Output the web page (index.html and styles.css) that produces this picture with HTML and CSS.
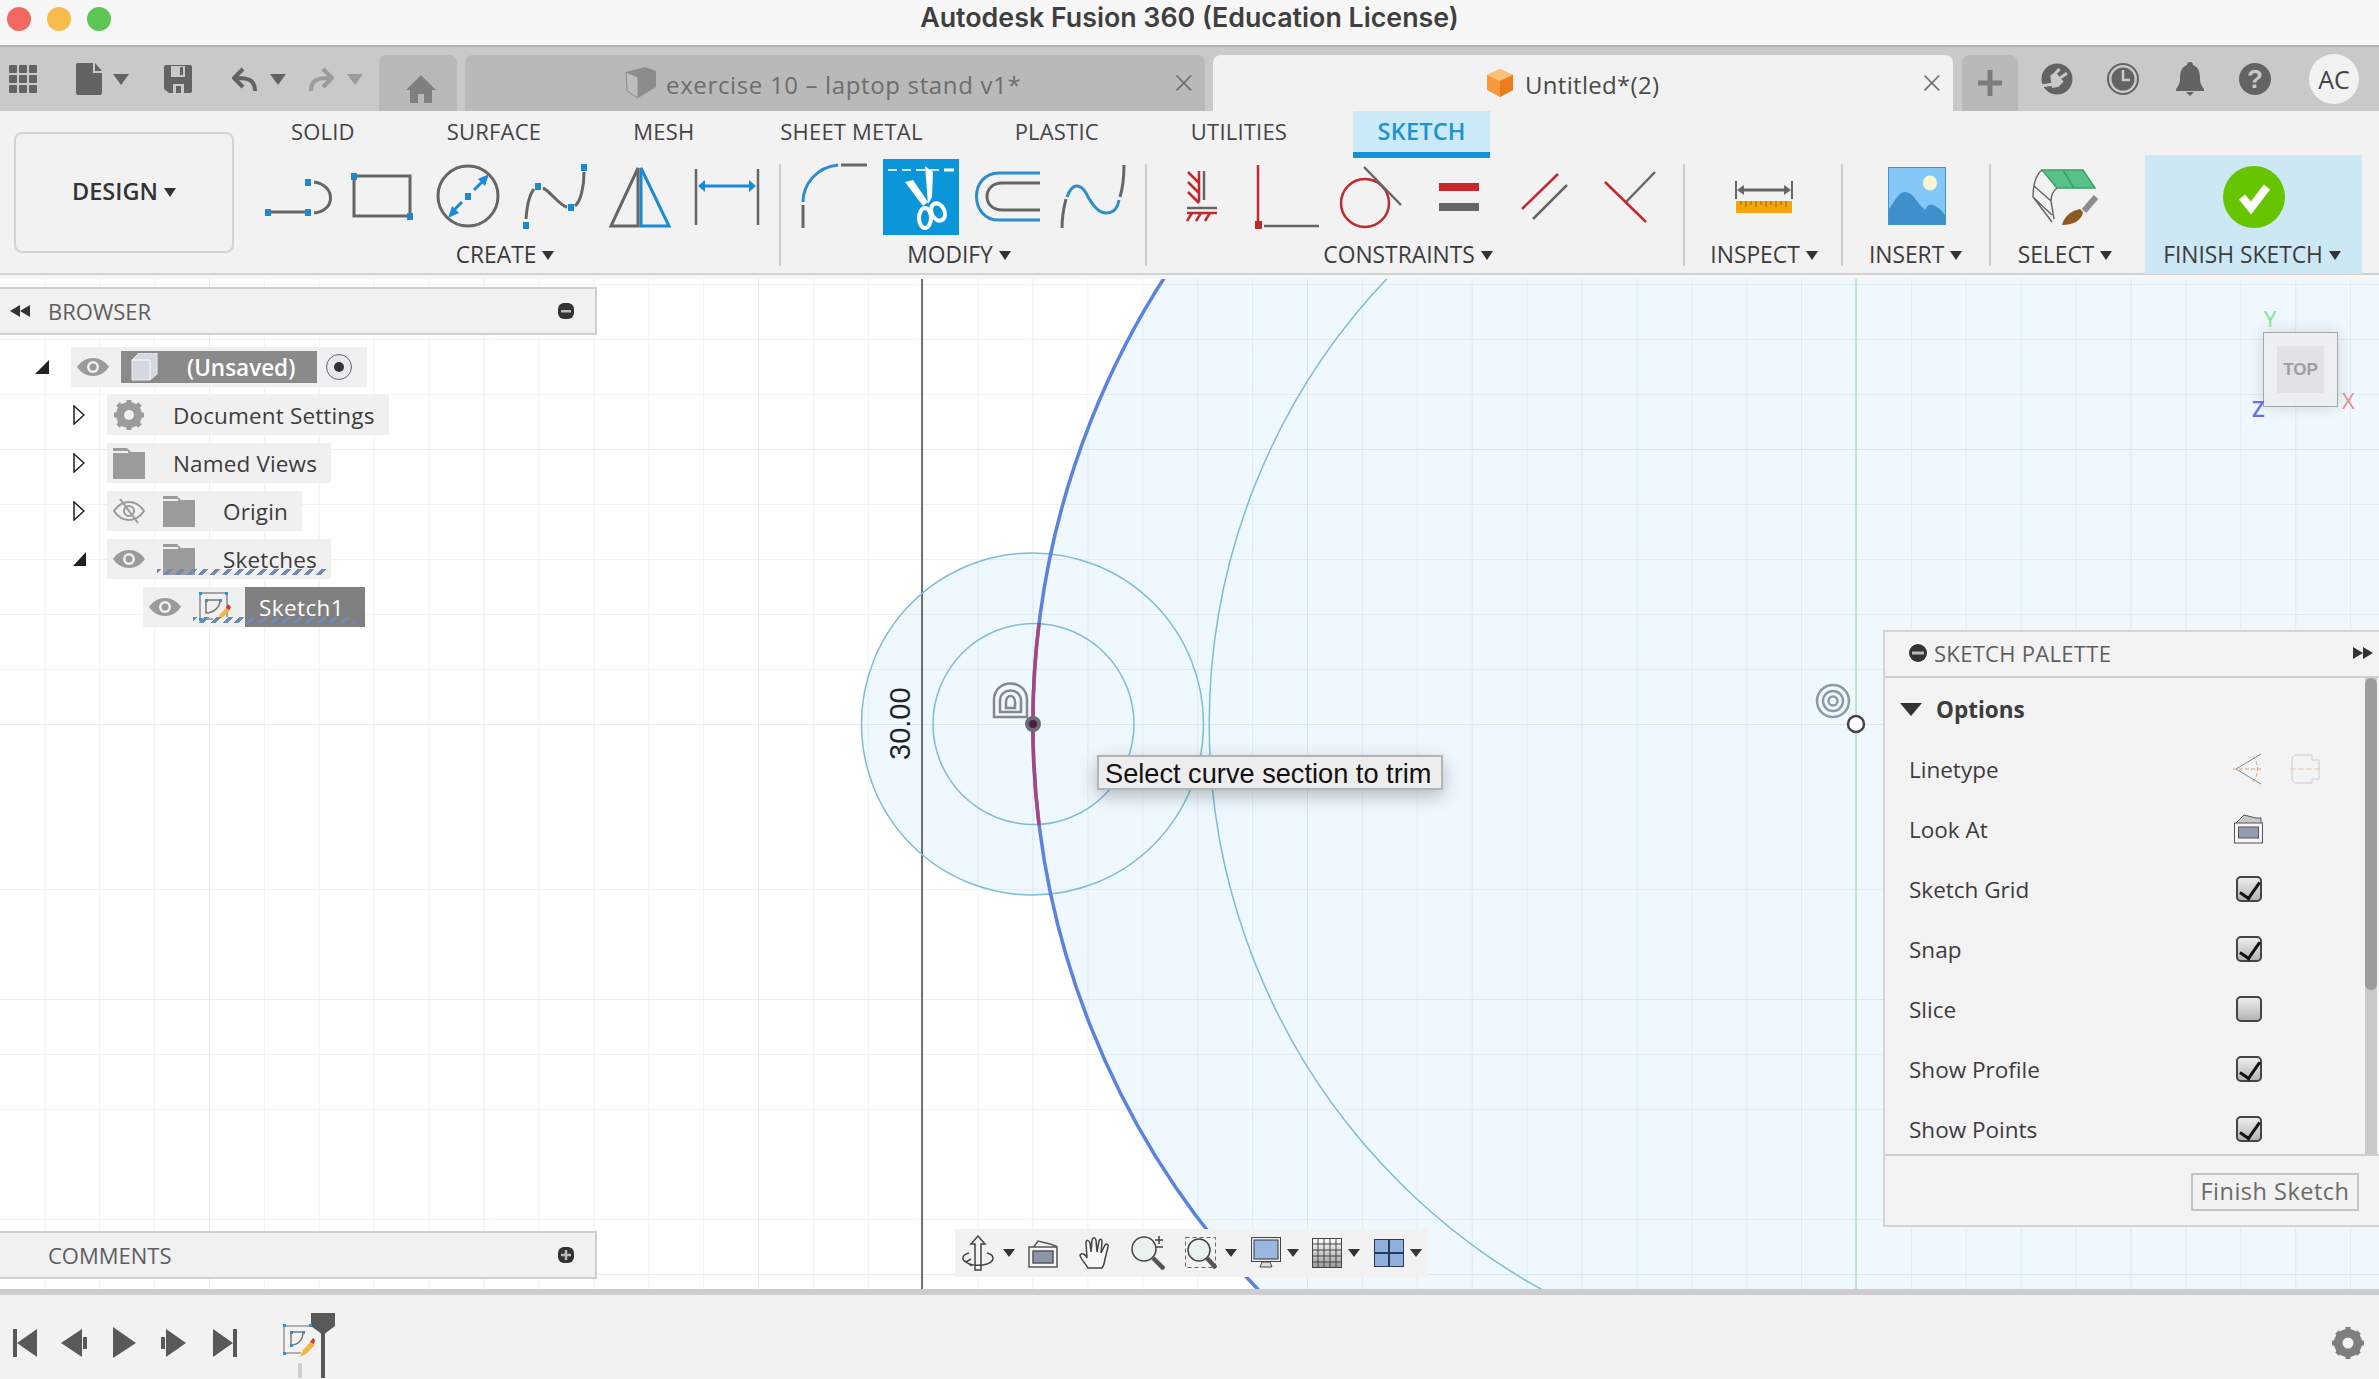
FILE: index.html
```html
<!DOCTYPE html>
<html lang="en">
<head>
  <meta charset="UTF-8">
  <title>Autodesk Fusion 360 (Education License)</title>
  <link rel="stylesheet" href="styles.css">
</head>
<body>
<div class="app">

  <!-- window title -->
  <div class="titlebar">
    <div class="lights">
      <span class="light red"></span>
      <span class="light yellow"></span>
      <span class="light green"></span>
    </div>
    <div class="title">Autodesk Fusion 360 (Education License)</div>
  </div>

  <!-- document tabs -->
  <div class="tabbar">
    <div class="quick">
      <svg class="qa-grid" width="28" height="28" viewBox="0 0 28 28" fill="#636363"><rect width="8" height="8" rx="1"/><rect x="10" width="8" height="8" rx="1"/><rect x="20" width="8" height="8" rx="1"/><rect y="10" width="8" height="8" rx="1"/><rect x="10" y="10" width="8" height="8" rx="1"/><rect x="20" y="10" width="8" height="8" rx="1"/><rect y="20" width="8" height="8" rx="1"/><rect x="10" y="20" width="8" height="8" rx="1"/><rect x="20" y="20" width="8" height="8" rx="1"/></svg>
      <svg class="qa-file" width="26" height="32" viewBox="0 0 26 32" fill="#636363"><path d="M2 0H17V10H26V30a2 2 0 0 1-2 2H2a2 2 0 0 1-2-2V2a2 2 0 0 1 2-2Z"/><path d="M19 0L26 8H19Z"/></svg>
      <span class="caret qa-c1"></span>
      <svg class="qa-save" width="28" height="28" viewBox="0 0 28 28" fill="#636363"><path d="M2 0H26a2 2 0 0 1 2 2V26a2 2 0 0 1-2 2H5L0 24V2a2 2 0 0 1 2-2Z"/><path d="M7 1H21V12H7Z" fill="#c9c9c9"/><rect x="16" y="2" width="3" height="8" fill="#636363"/><path d="M9 28V19H20V28H17V21H12V28Z" fill="#c9c9c9"/></svg>
      <svg class="qa-undo" width="26" height="24" viewBox="0 0 26 24" fill="none" stroke="#636363" stroke-width="4"><path d="M24 24C24 14 19 11 6 11"/><path d="M12 2L3 11L12 20" stroke-linejoin="round"/></svg>
      <span class="caret qa-c2"></span>
      <svg class="qa-redo" width="26" height="24" viewBox="0 0 26 24" fill="none" stroke="#9b9b9b" stroke-width="4"><path d="M2 24C2 14 7 11 20 11"/><path d="M14 2L23 11L14 20" stroke-linejoin="round"/></svg>
      <span class="caret qa-c3"></span>
    </div>
    <div class="tab tab-home">
      <svg width="30" height="28" viewBox="0 0 30 28" fill="#7f7f7f"><path d="M15 0L30 15H26V28H18V19H12V28H4V15H0Z"/></svg>
    </div>
    <div class="tab tab-doc">
      <svg width="32" height="32" viewBox="0 0 32 32"><path d="M1 5L20 0L31 4V20L13 31L2 24Z" fill="#8c8c8c"/><path d="M1 5L13 10V31L2 24Z" fill="#bdbdbd" stroke="#8c8c8c"/></svg>
      <span class="tab-text">exercise 10 – laptop stand v1*</span>
      <span class="tab-close">×</span>
    </div>
    <div class="tab tab-active">
      <svg width="30" height="30" viewBox="0 0 30 30"><path d="M15 1L28 7V22L15 29L2 22V7Z" fill="#f79a3e"/><path d="M2 7L15 13L28 7L15 1Z" fill="#fbc079"/><path d="M15 13V29L28 22V7Z" fill="#ec7c1c"/></svg>
      <span class="tab-text">Untitled*(2)</span>
      <span class="tab-close">×</span>
    </div>
    <div class="tab tab-plus">
      <svg width="24" height="26" viewBox="0 0 24 26" fill="#7c7c7c"><rect x="9.500" width="5" height="26"/><rect y="10.500" width="24" height="5"/></svg>
    </div>
    <div class="status">
      <svg width="32" height="34" viewBox="0 0 32 34"><circle cx="16" cy="17" r="15.500" fill="#636363"/><path d="M9.300 13.700L14.300 9.700L22.700 19.700L17.700 24.700L11 26Z" fill="#c9c9c9"/><path d="M14.300 11.300L18.700 7M19.300 15.700L26 11.300M11 22.300L0 24" fill="none" stroke="#c9c9c9" stroke-width="3"/></svg>
      <svg width="32" height="34" viewBox="0 0 32 34" fill="none" stroke="#636363"><circle cx="16" cy="17" r="15" stroke-width="2"/><circle cx="16" cy="17" r="11.500" fill="#636363" stroke="none"/><path d="M16 8V18H23" stroke="#c9c9c9" stroke-width="2.500"/></svg>
      <svg class="st-bell" width="28" height="34" viewBox="0 0 28 34" fill="#636363"><path d="M14 0a3 3 0 0 1 3 3C23 5 24 11 24 17C24 22 26 24 28 27V29H0V27C2 24 4 22 4 17C4 11 5 5 11 3a3 3 0 0 1 3-3Z"/><path d="M10 30H18L14 34Z"/></svg>
      <svg class="st-help" width="32" height="34" viewBox="0 0 32 34"><ellipse cx="16" cy="17" rx="16" ry="16" fill="#636363"/><text class="help-mark" x="16" y="26" text-anchor="middle">?</text></svg>
      <div class="avatar">AC</div>
    </div>
  </div>

  <!-- ribbon -->
  <div class="ribbon">
    <div class="design">DESIGN <span class="caret small dark"></span></div>
    <div class="ribbon-main">
      <div class="ribbon-tabs">
        <div class="rtab">SOLID</div>
        <div class="rtab">SURFACE</div>
        <div class="rtab">MESH</div>
        <div class="rtab rtab-sheet">SHEET METAL</div>
        <div class="rtab">PLASTIC</div>
        <div class="rtab">UTILITIES</div>
        <div class="rtab on">SKETCH</div>
      </div>
      <div class="groups">

        <div class="group">
          <div class="tools">
            <svg class="tool" viewBox="0 0 86 76" fill="none" stroke="#666" stroke-width="3"><path d="M16 53H52M60 23C82 26 82 52 60 54"/><g fill="#1a8ad4" stroke="none"><rect x="11" y="50" width="6" height="7"/><rect x="51" y="50" width="6" height="7"/><rect x="51" y="20" width="6" height="7"/></g></svg>
            <svg class="tool" viewBox="0 0 86 76" fill="none" stroke="#666" stroke-width="3"><path d="M14 17H70V57H14Z"/><g fill="#1a8ad4" stroke="none"><rect x="11" y="14" width="6" height="7"/><rect x="67" y="54" width="6" height="7"/></g></svg>
            <svg class="tool" viewBox="0 0 86 76" fill="none" stroke="#666" stroke-width="3"><circle cx="42" cy="37" r="30"/><g stroke="#1a8ad4"><path d="M26 53L36 43M48 31L58 21"/></g><g fill="#1a8ad4" stroke="none"><rect x="39" y="34" width="6" height="7"/><path d="M22 59L26 47L33 54Z"/><path d="M63 15L59 27L52 20Z"/></g></svg>
            <svg class="tool" viewBox="0 0 86 76" fill="none" stroke="#666" stroke-width="3"><path d="M14 60C15 46 17 36 22 30M31 29C38 32 48 47 55 48M63 47C69 42 72 27 72 13"/><g fill="#1a8ad4" stroke="none"><rect x="11" y="63" width="6" height="7"/><rect x="23" y="24" width="6" height="7"/><rect x="56" y="45" width="6" height="7"/><rect x="69" y="5" width="6" height="7"/></g></svg>
            <svg class="tool" viewBox="0 0 86 76" fill="none" stroke-width="3"><path d="M40 9L13 67H40Z" stroke="#666"/><path d="M43 9L71 67H43Z" stroke="#1a8ad4"/></svg>
            <svg class="tool" viewBox="0 0 86 76" fill="none" stroke="#666" stroke-width="2.500"><path d="M12 10V66M74 10V66"/><path d="M18 27H68" stroke="#1a8ad4" stroke-width="3"/><g fill="#1a8ad4" stroke="none"><path d="M14 27L21 21V33Z"/><path d="M72 27L65 21V33Z"/></g></svg>
          </div>
          <div class="label label-create">CREATE <span class="caret small dark"></span></div>
        </div>
        <div class="sep"></div>

        <div class="group">
          <div class="tools">
            <svg class="tool" viewBox="0 0 86 76" fill="none" stroke-width="3"><path d="M11 46V69M49 6H75" stroke="#666"/><path d="M11 43C11 25 25 8 46 6" stroke="#2f8dcc"/></svg>
            <svg class="tool" viewBox="0 0 86 76" fill="none"><rect x="5" width="76" height="76" fill="#0a96d8"/><path d="M10 11H66" stroke="#fff" stroke-width="2" stroke-dasharray="9 5" opacity=".8"/><path d="M66 11H76" stroke="#fff" stroke-width="3"/><path d="M47 7L55 13L54 38L50 45Z M27 23L35 21L50 43L45 47Z" fill="#fff"/><ellipse cx="47" cy="59" rx="6" ry="10" stroke="#fff" stroke-width="4"/><ellipse cx="60" cy="53" rx="6.500" ry="9" transform="rotate(-25 60 53)" stroke="#fff" stroke-width="4"/></svg>
            <svg class="tool" viewBox="0 0 86 76" fill="none" stroke-width="3"><path d="M76 14H35C5 14 5 61 35 61H76" stroke="#2f8dcc"/><path d="M76 24H38C18 24 18 51 38 51H76" stroke="#666"/></svg>
            <svg class="tool" viewBox="0 0 86 76" fill="none" stroke-width="3"><path d="M12 69C12 55 14 48 16 40M70 38C73 28 74 16 74 6" stroke="#666"/><path d="M17 38C22 24 30 24 36 34C42 46 48 54 56 54C64 54 68 48 69 41" stroke="#2f8dcc"/></svg>
          </div>
          <div class="label label-modify">MODIFY <span class="caret small dark"></span></div>
        </div>
        <div class="sep"></div>

        <div class="group">
          <div class="tools">
            <svg class="tool" viewBox="0 0 86 76" fill="none" stroke="#c02a2e" stroke-width="2.500"><path d="M41 12V43M30 13L41 24M30 23L41 34M30 33L41 44"/><path d="M46 12V41M29 49H59" stroke="#666"/><path d="M29 54H59M34 54L29 62M43 54L38 62M52 54L47 62"/></svg>
            <svg class="tool" viewBox="0 0 86 76" fill="none" stroke-width="2.500"><path d="M14 6V62" stroke="#c02a2e"/><rect x="11" y="62" width="7" height="8" fill="#c02a2e"/><path d="M20 67H75" stroke="#666"/></svg>
            <svg class="tool" viewBox="0 0 86 76" fill="none" stroke-width="2.500"><circle cx="35" cy="44" r="24" stroke="#c02a2e"/><path d="M34 8L71 46" stroke="#666"/></svg>
            <svg class="tool" viewBox="0 0 86 76"><rect x="23" y="24" width="40" height="8" fill="#c8282c"/><rect x="23" y="44" width="40" height="8" fill="#666"/></svg>
            <svg class="tool" viewBox="0 0 86 76" fill="none" stroke-width="2.500"><path d="M56 15L20 50" stroke="#c02a2e"/><path d="M65 26L31 60" stroke="#666"/></svg>
            <svg class="tool" viewBox="0 0 86 76" fill="none" stroke-width="2.500"><path d="M67 13L38 43" stroke="#666"/><path d="M17 23L58 63" stroke="#c02a2e"/></svg>
          </div>
          <div class="label label-constraints">CONSTRAINTS <span class="caret small dark"></span></div>
        </div>
        <div class="sep"></div>

        <div class="group group-inspect">
          <svg class="tool-one" viewBox="0 0 70 76" fill="none"><path d="M7 22V40M63 22V40" stroke="#666" stroke-width="2"/><path d="M12 31H58" stroke="#666" stroke-width="3"/><g fill="#666"><path d="M8 31L15 26V36Z"/><path d="M62 31L55 26V36Z"/></g><rect x="7" y="42" width="56" height="12" fill="#f5a50a"/><path d="M12 42V46M17 42V48M22 42V46M27 42V48M32 42V46M37 42V48M42 42V46M47 42V48M52 42V46M57 42V48" stroke="#8a6410" stroke-width="1"/></svg>
          <div class="label">INSPECT <span class="caret small dark"></span></div>
        </div>
        <div class="sep"></div>

        <div class="group group-insert">
          <svg class="tool-one" viewBox="0 0 70 76"><rect x="6.500" y="8.500" width="57" height="57" fill="#84c8f8" stroke="#3f93cf"/><ellipse cx="48" cy="24" rx="7" ry="7.500" fill="#fbf6d2"/><path d="M7 65V50C14 40 17 33 23 33C31 33 35 44 43 51C46 45 48 45 51 46C56 48 60 51 63 56V65Z" fill="#3f8fcb"/></svg>
          <div class="label label-insert">INSERT <span class="caret small dark"></span></div>
        </div>
        <div class="sep"></div>

        <div class="group group-select">
          <svg class="tool-one" viewBox="0 0 70 76" fill="none"><path d="M12 11H53L65 29H27Z" fill="#57c187" stroke="#3f9e68" stroke-width="1.500"/><path d="M33 11L44 29" stroke="#3f9e68" stroke-width="1.500"/><path d="M12 11C6 16 3 24 3 38L22 63M27 29C23 32 21 36 21 42L24 60M4 27L21 42M3 38L22 56" stroke="#666" stroke-width="1.500"/><path d="M66 38L54 52" stroke="#8d8d8d" stroke-width="6"/><path d="M50 50C40 52 34 58 32 66C42 66 52 62 53 53Z" fill="#8d5a23"/></svg>
          <div class="label">SELECT <span class="caret small dark"></span></div>
        </div>

        <div class="group group-finish">
          <svg class="tool-one" viewBox="0 0 70 76"><circle cx="35" cy="42" r="31" fill="#66c400"/><path d="M23 42L32 53L48 32" fill="none" stroke="#fff" stroke-width="8"/></svg>
          <div class="label label-finish">FINISH SKETCH <span class="caret small dark"></span></div>
        </div>

      </div>
    </div>
  </div>

  <!-- canvas -->
  <div class="canvas">
    <svg class="drawing" viewBox="0 275 2379 1015" width="2379" height="1015">
      <defs>
        <pattern id="gridMinor" x="1856" y="724" width="54.900" height="55" patternUnits="userSpaceOnUse">
          <path d="M0 0V55M0 0H54.900" stroke="#6d8494" stroke-opacity=".11" stroke-width="2"/>
        </pattern>
        <pattern id="gridMajor" x="1856" y="724" width="274.500" height="275" patternUnits="userSpaceOnUse">
          <path d="M0 0V275M0 0H274.500" stroke="#6d8494" stroke-opacity=".06" stroke-width="2"/>
        </pattern>
      </defs>
      <circle cx="1856" cy="724" r="823" fill="#eef8fe"/>
      <circle cx="1032.500" cy="724" r="171" fill="#eef8fe"/>
      <rect y="275" width="2379" height="1015" fill="url(#gridMinor)"/>
      <rect y="275" width="2379" height="1015" fill="url(#gridMajor)"/>
      <path d="M922 275V1290" stroke="#707070" stroke-width="2"/>
      <path d="M1856 275V1290" stroke="#a9e6b8" stroke-width="1.500"/>
      <g fill="none" stroke="#7fbcd6" stroke-width="1.500">
        <circle cx="1032.500" cy="724" r="171"/>
        <circle cx="1033.500" cy="724" r="100.500"/>
        <path d="M1856 77A647 647 0 0 0 1856 1371"/>
      </g>
      <circle cx="1856" cy="724" r="823" fill="none" stroke="#5c82e0" stroke-width="3.500"/>
      <path d="M1039 623A823 823 0 0 0 1039 825" fill="none" stroke="#a6457f" stroke-width="3.500"/>
      <circle cx="1033" cy="724" r="8" fill="#6b6b70"/>
      <circle cx="1033" cy="724" r="4" fill="#4a1e48"/>
      <g fill="none" stroke="#85898d" stroke-width="2.500">
        <path d="M994 717V700C994 678 1027 678 1027 700V717Z"/>
        <path d="M1000 712V701C1000 687 1021 687 1021 701V712Z"/>
        <path d="M1006 708V702C1006 694 1015 694 1015 702V708Z"/>
      </g>
      <g fill="none" stroke="#8e9aa2" stroke-width="2.500">
        <circle cx="1833" cy="701" r="16"/>
        <circle cx="1833" cy="701" r="10"/>
        <circle cx="1833" cy="701" r="4.500"/>
      </g>
      <circle cx="1856" cy="724" r="8" fill="#fff" stroke="#444" stroke-width="2.500"/>
      <text class="dim-text" transform="translate(910 760) rotate(-90)">30.00</text>
    </svg>

    <div class="panel-head browser-head">
      <svg width="24" height="14" viewBox="0 0 24 14" fill="#333"><path d="M0 7L10 1V13Z"/><path d="M10 7L20 1V13Z"/></svg>
      <span class="panel-title">BROWSER</span>
      <svg class="panel-btn" width="18" height="18" viewBox="0 0 18 18"><rect y="1" width="16" height="16" rx="6" fill="#333"/><rect x="3" y="8" width="10" height="2.500" fill="#bbb"/></svg>
    </div>

    <div class="tree">
      <div class="tree-row depth0">
        <svg class="twist" width="16" height="14" viewBox="0 0 16 14"><path d="M14 0V14H0Z" fill="#222"/></svg>
        <div class="node node-root">
          <svg class="eye" width="32" height="24" viewBox="0 0 32 24"><path d="M0 12C8 0 24 0 32 12C24 24 8 24 0 12Z" fill="#9b9b9b"/><circle cx="16" cy="12" r="6" fill="#f0f0f0"/><circle cx="16" cy="12" r="3.500" fill="#9b9b9b"/></svg>
          <div class="root-name">
            <svg width="28" height="28" viewBox="0 0 28 28"><path d="M2 7L9 0H27V21L20 27H2Z" fill="#d3d8e2" stroke="#eee"/><path d="M2 7H20V27" fill="none" stroke="#fff"/></svg>
            <span>(Unsaved)</span>
          </div>
          <svg class="radio" width="28" height="28" viewBox="0 0 28 28"><circle cx="14" cy="14" r="12.500" fill="#e8e8ee" stroke="#666"/><circle cx="14" cy="14" r="5" fill="#333"/></svg>
        </div>
      </div>
      <div class="tree-row depth1">
        <svg class="twist" width="12" height="20" viewBox="0 0 12 20"><path d="M1 1L11 10L1 19Z" fill="#fff" stroke="#222" stroke-width="1.500"/></svg>
        <div class="node">
          <svg width="32" height="32" viewBox="0 0 32 32"><circle cx="16" cy="16" r="9.500" fill="none" stroke="#9b9b9b" stroke-width="7"/><path d="M16 1V31M1 16H31M5 5L27 27M27 5L5 27" stroke="#9b9b9b" stroke-width="5"/><circle cx="16" cy="16" r="5" fill="#f0f0f0"/></svg>
          <span class="node-text wide">Document Settings</span>
        </div>
      </div>
      <div class="tree-row depth1">
        <svg class="twist" width="12" height="20" viewBox="0 0 12 20"><path d="M1 1L11 10L1 19Z" fill="#fff" stroke="#222" stroke-width="1.500"/></svg>
        <div class="node">
          <svg width="32" height="32" viewBox="0 0 32 32" fill="#9b9b9b"><path d="M0 1H14L18 5H32V32H0Z"/><path d="M0 5H15" stroke="#f0f0f0" stroke-width="2"/></svg>
          <span class="node-text wide">Named Views</span>
        </div>
      </div>
      <div class="tree-row depth1">
        <svg class="twist" width="12" height="20" viewBox="0 0 12 20"><path d="M1 1L11 10L1 19Z" fill="#fff" stroke="#222" stroke-width="1.500"/></svg>
        <div class="node">
          <svg width="32" height="28" viewBox="0 0 32 28" fill="none" stroke="#9b9b9b" stroke-width="2"><path d="M1 14C9 2 23 2 31 14C23 26 9 26 1 14Z"/><circle cx="16" cy="14" r="5"/><path d="M7 2L25 26"/></svg>
          <svg class="folder2" width="32" height="32" viewBox="0 0 32 32" fill="#9b9b9b"><path d="M0 1H14L18 5H32V32H0Z"/><path d="M0 5H15" stroke="#f0f0f0" stroke-width="2"/></svg>
          <span class="node-text">Origin</span>
        </div>
      </div>
      <div class="tree-row depth1">
        <svg class="twist" width="14" height="14" viewBox="0 0 14 14"><path d="M13 0V14H0Z" fill="#222"/></svg>
        <div class="node">
          <svg width="32" height="24" viewBox="0 0 32 24"><path d="M0 12C8 0 24 0 32 12C24 24 8 24 0 12Z" fill="#9b9b9b"/><circle cx="16" cy="12" r="6" fill="#f0f0f0"/><circle cx="16" cy="12" r="3.500" fill="#9b9b9b"/></svg>
          <svg class="folder2" width="32" height="32" viewBox="0 0 32 32" fill="#9b9b9b"><path d="M0 1H14L18 5H32V32H0Z"/><path d="M0 5H15" stroke="#f0f0f0" stroke-width="2"/></svg>
          <span class="node-text">Sketches</span>
          <div class="wavy wavy-folder"></div>
        </div>
      </div>
      <div class="tree-row depth2">
        <div class="node node-sketch">
          <svg width="32" height="24" viewBox="0 0 32 24"><path d="M0 12C8 0 24 0 32 12C24 24 8 24 0 12Z" fill="#9b9b9b"/><circle cx="16" cy="12" r="6" fill="#f0f0f0"/><circle cx="16" cy="12" r="3.500" fill="#9b9b9b"/></svg>
          <svg class="sketch-ico" width="32" height="32" viewBox="0 0 32 32" fill="none"><path d="M1 2H28V26M1 2V28H14" stroke="#8a8a8a" stroke-width="1.500"/><path d="M7 9H21C21 16 15 22 7 22V9" stroke="#777" stroke-width="1.500"/><g fill="#3b8ed0"><rect y="1" width="3" height="3"/><rect x="26" y="1" width="3" height="3"/><rect y="27" width="3" height="3"/><rect x="6" y="8" width="3" height="3"/><rect x="20" y="8" width="3" height="3"/></g><path d="M18 30L21 23L29 15L32 18L24 26Z" fill="#f3b544"/><path d="M27 17L29 13L32 16L30 19Z" fill="#d0382f"/></svg>
          <span class="sketch-name">Sketch1</span>
          <div class="wavy wavy-sketch"></div>
        </div>
      </div>
    </div>

    <div class="panel-head comments-head">
      <span class="panel-title">COMMENTS</span>
      <svg class="panel-btn" width="18" height="18" viewBox="0 0 18 18"><rect y="1" width="16" height="16" rx="6" fill="#333"/><path d="M3 9H13M8 4V14" stroke="#bbb" stroke-width="2.500"/></svg>
    </div>

    <div class="viewcube">
      <span class="axis axis-y">Y</span>
      <span class="axis axis-x">X</span>
      <span class="axis axis-z">Z</span>
      <div class="cube-face">TOP</div>
    </div>

    <div class="tooltip">Select curve section to trim</div>

    <div class="navbar">
      <svg width="34" height="36" viewBox="0 0 34 36" fill="none" stroke="#444" stroke-width="1.500"><path d="M17 1L24 9H20V35H14V9H10Z" fill="#f2f2f2"/><path d="M26 18C34 20 34 26 26 29C20 31 10 31 5 27C0 24 1 20 8 18M5 27L10 24M5 27L11 31"/></svg>
      <span class="caret nav-c"></span>
      <svg class="nav-look" width="30" height="30" viewBox="0 0 30 30" fill="none" stroke="#555" stroke-width="1.500"><path d="M2 14L10 3L22 6L28 8V14"/><rect x="1" y="9" width="28" height="20" fill="#f5f5f5"/><rect x="5" y="13" width="20" height="12" fill="#8c95a8"/></svg>
      <svg class="nav-hand" width="32" height="32" viewBox="0 0 32 32" fill="#f7f7f7" stroke="#444" stroke-width="1.500"><path d="M9 31C6 26 1 21 1 18C3 15 7 18 8 21L7 6C7 2 10 3 11 6L12 15L13 3C14 0 16 0 17 3L18 15L20 4C21 1 23 2 23 5L22 16L26 8C28 6 30 8 29 10L26 22C25 27 25 29 23 31Z"/></svg>
      <svg class="nav-zoom" width="34" height="34" viewBox="0 0 34 34" fill="none"><circle cx="13" cy="13" r="12" fill="#eaf2ee" stroke="#444" stroke-width="1.500"/><path d="M22 22L33 33" stroke="#555" stroke-width="4.500"/><path d="M24 4H32M28 0V8M24 11H32" stroke="#444" stroke-width="1.500"/></svg>
      <svg class="nav-fit" width="32" height="32" viewBox="0 0 32 32" fill="none"><rect x=".5" y=".5" width="30" height="30" stroke="#666" stroke-dasharray="4 3"/><circle cx="14" cy="13" r="11" fill="#eaf2ee" stroke="#444" stroke-width="1.500"/><path d="M22 21L31 31" stroke="#555" stroke-width="4.500"/></svg>
      <span class="caret nav-c"></span>
      <svg class="nav-mon" width="30" height="32" viewBox="0 0 30 32"><rect x=".5" y=".5" width="29" height="24" fill="#eee" stroke="#444"/><rect x="3" y="3" width="24" height="19" fill="#9ab8de" stroke="#334"/><path d="M11 25H19L21 30H9Z" fill="#ddd" stroke="#444"/></svg>
      <span class="caret nav-c tight"></span>
      <svg class="nav-grid" width="30" height="32" viewBox="0 0 30 32"><defs><linearGradient id="fade" x1="0" y1="0" x2="0" y2="1"><stop offset="0" stop-color="#fff"/><stop offset="1" stop-color="#999"/></linearGradient></defs><rect width="30" height="30" y="1" fill="url(#fade)"/><path d="M.5 1V31M6 1V31M12 1V31M18 1V31M24 1V31M29.500 1V31M0 1.500H30M0 7H30M0 13H30M0 19H30M0 25H30M0 30.500H30" stroke="#444" stroke-width="1"/></svg>
      <span class="caret nav-c tight"></span>
      <svg class="nav-view" width="30" height="28" viewBox="0 0 30 28" fill="#8fb0dc" stroke="#2a3a55" stroke-width="1"><rect x=".5" y=".5" width="14" height="13"/><rect x="15.500" y=".5" width="14" height="13"/><rect x=".5" y="14.500" width="14" height="13"/><rect x="15.500" y="14.500" width="14" height="13"/></svg>
      <span class="caret nav-c tight"></span>
    </div>

    <div class="palette">
      <div class="palette-head">
        <svg width="18" height="18" viewBox="0 0 18 18"><circle cx="9" cy="9" r="9" fill="#333"/><rect x="3" y="7.500" width="12" height="3" fill="#bbb"/></svg>
        <span class="panel-title">SKETCH PALETTE</span>
        <svg class="palette-arrows" width="20" height="14" viewBox="0 0 20 14" fill="#333"><path d="M0 1L10 7L0 13Z"/><path d="M10 1L20 7L10 13Z"/></svg>
      </div>
      <div class="palette-body">
        <div class="options">
          <div class="options-head"><span class="caret big"></span><b>Options</b></div>
          <div class="opt">
            <span>Linetype</span>
            <div class="opt-ico">
              <svg class="opt-line" width="32" height="32" viewBox="0 0 32 32" fill="none"><path d="M28 1L3 16L28 31" stroke="#888" stroke-width="1"/><path d="M0 16H30M20 3C26 10 26 22 20 29" stroke="#e0a27a" stroke-width="1" stroke-dasharray="4 2"/></svg>
              <svg class="opt-ico2" width="32" height="32" viewBox="0 0 32 32" fill="none"><path d="M5 2H22V7H29V26H22V30H5L2 27V5Z" stroke="#ccc" stroke-width="1"/><path d="M0 16H32" stroke="#e8c4ac" stroke-width="1" stroke-dasharray="6 2"/></svg>
            </div>
          </div>
          <div class="opt">
            <span>Look At</span>
            <div class="opt-ico">
              <svg class="opt-look" width="30" height="30" viewBox="0 0 30 30" fill="none" stroke="#555" stroke-width="1"><path d="M2 9L10 1L22 4L27 4V9" fill="#c8c8cc"/><rect x=".5" y="9" width="28" height="20" fill="#f6f6f8"/><rect x="4.500" y="13" width="20" height="11" fill="#949cb0"/></svg>
            </div>
          </div>
          <div class="opt"><span>Sketch Grid</span><div class="opt-ico"><span class="check on"></span></div></div>
          <div class="opt"><span>Snap</span><div class="opt-ico"><span class="check on"></span></div></div>
          <div class="opt"><span>Slice</span><div class="opt-ico"><span class="check"></span></div></div>
          <div class="opt"><span>Show Profile</span><div class="opt-ico"><span class="check on"></span></div></div>
          <div class="opt"><span>Show Points</span><div class="opt-ico"><span class="check on"></span></div></div>
        </div>
        <div class="scrollbar"><div class="thumb"></div></div>
      </div>
      <div class="palette-foot"><div class="finish-btn">Finish Sketch</div></div>
    </div>
  </div>

  <!-- timeline -->
  <div class="timeline">
    <svg class="transport" width="340" height="83" viewBox="0 0 340 83" fill="#595959">
      <rect x="13" y="34" width="4" height="28"/><path d="M17 48L37 34V62Z"/>
      <path d="M61 48L82 34V62Z"/><rect x="83" y="42" width="4" height="12"/>
      <path d="M113 32L136 48L113 63Z"/>
      <rect x="161" y="42" width="4" height="12"/><path d="M166 34L186 48L166 62Z"/>
      <path d="M213 34L233 48L213 62Z"/><rect x="233" y="34" width="4" height="28"/>
      <path d="M311 18H335V31L323 40L311 31Z"/><rect x="321" y="35" width="4" height="48"/>
      <rect x="298" y="68" width="4" height="15" fill="#cfcfcf"/>
      <g fill="none"><path d="M284 31H310M284 31V58H301" stroke="#9a9a9a" stroke-width="1.500"/><path d="M291 37H303C303 45 298 50 291 50V37" stroke="#777" stroke-width="1.500"/></g>
      <g fill="#3b8ed0"><rect x="283" y="29" width="3" height="3"/><rect x="309" y="29" width="3" height="3"/><rect x="283" y="57" width="3" height="3"/><rect x="290" y="36" width="3" height="3"/><rect x="302" y="36" width="3" height="3"/><rect x="290" y="49" width="3" height="3"/></g>
      <path d="M300 62L303 55L311 46L315 50L306 59Z" fill="#f3b544"/><path d="M310 47L313 43L315 45L314 49Z" fill="#d0382f"/>
    </svg>
    <svg class="gear" width="34" height="34" viewBox="0 0 34 34"><circle cx="17" cy="17" r="10.500" fill="none" stroke="#7e7e7e" stroke-width="7"/><path d="M17 1V33M1 17H33M6 6L28 28M28 6L6 28" stroke="#7e7e7e" stroke-width="5"/><circle cx="17" cy="17" r="5.500" fill="#f2f2f2"/></svg>
  </div>

</div>
</body>
</html>
```

FILE: styles.css
```css
* {
  box-sizing: border-box;
}
body {
  margin: 0;
  background: #fff;
  font-family: "Open Sans", "Noto Sans", sans-serif;
  color: #3c3c3c;
}
svg {
  display: block;
  flex: none;
}
.app {
  display: flex;
  flex-direction: column;
  width: 2379px;
  height: 1379px;
  overflow: hidden;
}

/* title bar */
.titlebar {
  position: relative;
  display: flex;
  align-items: center;
  justify-content: center;
  height: 47px;
  background: #f8f7f7;
  border-bottom: 2px solid #b0b0b0;
}
.lights {
  position: absolute;
  top: 7px;
  left: 7px;
  display: flex;
  gap: 16px;
}
.light {
  width: 24px;
  height: 24px;
  border-radius: 50%;
}
.light.red { background: #f2685e; }
.light.yellow { background: #f6bd4c; }
.light.green { background: #5dc553; }
.title {
  font-family: Inter, "Liberation Sans", sans-serif;
  font-size: 26.800px;
  font-weight: 600;
  margin-top: -11px;
  color: #3f3f3f;
}

/* carets */
.caret {
  display: inline-block;
  width: 0;
  height: 0;
  border-left: 8px solid transparent;
  border-right: 8px solid transparent;
  border-top: 11px solid #636363;
}
.caret.small {
  border-left-width: 6.500px;
  border-right-width: 6.500px;
  border-top-width: 9px;
  vertical-align: 3px;
}
.caret.dark { border-top-color: #333; }
.caret.big {
  border-left-width: 11px;
  border-right-width: 11px;
  border-top-width: 13px;
  border-top-color: #333;
}

/* tab bar */
.tabbar {
  display: flex;
  align-items: flex-end;
  height: 64px;
  background: #c9c9c9;
}
.quick {
  position: relative;
  display: flex;
  align-items: center;
  align-self: stretch;
  width: 379px;
  padding-left: 9px;
}
.qa-file { margin-left: 39px; }
.qa-c1 { margin-left: 11px; }
.qa-save { margin-left: 35px; }
.qa-undo { margin-left: 39px; }
.qa-c2 { margin-left: 13px; }
.qa-redo { margin-left: 23px; }
.qa-c3 { margin-left: 12px; border-top-color: #9b9b9b; }
.tab {
  display: flex;
  align-items: center;
  height: 56px;
  margin-right: 8px;
  border-radius: 8px 8px 0 0;
  background: #b9b9b9;
  color: #6d6d6d;
  font-size: 24px;
}
.tab-home {
  justify-content: center;
  width: 78px;
  padding-top: 12px;
  padding-left: 5px;
}
.tab-doc {
  width: 740px;
  padding-left: 160px;
  padding-right: 11px;
}
.tab-active {
  width: 740px;
  background: #f2f2f2;
  padding-left: 272px;
  padding-right: 11px;
  color: #4a4a4a;
}
.tab-text {
  margin-top: 2px;
  margin-left: 9px;
  letter-spacing: .65px;
}
.tab-active .tab-text {
  margin-left: 10px;
  letter-spacing: .3px;
}
.tab-close {
  margin-left: auto;
  font-size: 36px;
  font-weight: 300;
  line-height: 1;
  color: #6a6a6a;
}
.tab-plus {
  justify-content: center;
  width: 56px;
  margin-left: 1px;
  margin-right: 0;
}
.status {
  display: flex;
  align-items: center;
  align-self: stretch;
  flex: 1;
  gap: 34px;
  padding-left: 23px;
}
.st-bell { margin-left: 3px; }
.st-help { margin-left: 1px; }
.help-mark {
  font-family: "Liberation Sans", sans-serif;
  font-size: 26px;
  font-weight: bold;
  fill: #c9c9c9;
}
.avatar {
  display: flex;
  align-items: center;
  justify-content: center;
  width: 50px;
  height: 50px;
  margin-left: 4px;
  border-radius: 50%;
  background: #f2f2f2;
  font-size: 25px;
  color: #444;
}

/* ribbon */
.ribbon {
  display: flex;
  height: 164px;
  background: #f2f2f2;
  border-bottom: 2px solid #d2d2d2;
}
.design {
  width: 220px;
  height: 121px;
  margin: 21px 20px 0 14px;
  border: 2px solid #d4d4d4;
  border-radius: 8px;
  line-height: 115px;
  text-align: center;
  font-size: 23.500px;
  font-weight: 600;
  color: #333;
}
.ribbon-main {
  flex: 1;
  min-width: 0;
}
.ribbon-tabs {
  display: flex;
  gap: 44px;
  height: 47px;
  padding-left: 13px;
}
.rtab {
  height: 47px;
  padding: 0 24px;
  line-height: 41px;
  font-size: 22px;
  letter-spacing: .2px;
  color: #444;
}
.rtab-sheet { margin-left: -6px; }
.rtab.on {
  width: 137px;
  margin-left: -2px;
  padding: 0;
  background: #cce9f7;
  border-bottom: 6px solid #1092d4;
  color: #1a93d3;
  font-size: 23.500px;
  font-weight: 600;
  text-align: center;
}
.groups {
  display: flex;
  height: 115px;
  margin-top: 1px;
}
.group {
  display: flex;
  flex-direction: column;
  align-items: center;
}
.tools {
  display: flex;
}
.tool {
  width: 86px;
  height: 76px;
}
.tool-one {
  width: 70px;
  height: 76px;
}
.label {
  margin-top: 6px;
  line-height: 28px;
  font-size: 22.800px;
  color: #3c3c3c;
  white-space: nowrap;
}
.label-create { margin-right: 14px; }
.label-modify { margin-right: 10px; }
.label-constraints { margin-right: 16px; }
.label-insert { margin-right: 3px; }
.label-finish { margin-right: 3px; }
.sep {
  width: 2px;
  height: 102px;
  margin: 5px 11px 0 9px;
  background: #cdcdcd;
}
.group-inspect { width: 136px; }
.group-insert { width: 126px; }
.group-insert .tool-one { margin-right: 1px; }
.group-select { width: 126px; }
.group-finish {
  width: 217px;
  height: 119px;
  margin-top: -4px;
  margin-left: 17px;
  background: #cde8f5;
}
.group-finish .label { margin-top: 10px; }

/* canvas */
.canvas {
  position: relative;
  height: 1014px;
  overflow: hidden;
  background: #fff;
}
.canvas::before {
  content: "";
  position: absolute;
  top: 0;
  left: 0;
  right: 0;
  z-index: 1;
  height: 4px;
  background: #f6f6f6;
}
.drawing {
  position: absolute;
  top: 0;
  left: 0;
}
.dim-text {
  font-family: "Liberation Sans", sans-serif;
  font-size: 29px;
  fill: #222;
}
.panel-head {
  position: absolute;
  left: 0;
  display: flex;
  align-items: center;
  width: 597px;
  height: 48px;
  padding-left: 10px;
  background: #f1f1f1;
  border: 2px solid #cfcfcf;
  border-left: 0;
}
.browser-head { top: 12px; }
.comments-head {
  top: 956px;
  padding-left: 48px;
}
.panel-title {
  font-size: 22px;
  color: #5e5e5e;
}
.browser-head .panel-title { margin-left: 14px; }
.panel-btn {
  margin-left: auto;
  margin-right: 19px;
}

/* browser tree */
.tree {
  position: absolute;
  top: 72px;
  left: 0;
  display: flex;
  flex-direction: column;
  gap: 8px;
}
.tree-row {
  position: relative;
  display: flex;
  align-items: center;
  height: 40px;
}
.depth0 { padding-left: 35px; }
.depth0 .twist { margin-right: 20px; }
.depth1 { padding-left: 73px; }
.depth1 .twist { margin-right: 22px; }
.depth1 svg.twist[width="14"] { margin-right: 20px; }
.depth2 { padding-left: 143px; }
.node {
  position: relative;
  display: flex;
  align-items: center;
  height: 40px;
  padding: 0 14px 0 6px;
  background: #f0f0f0;
  font-size: 22.500px;
  color: #3c3c3c;
}
.node-text {
  margin-left: 28px;
  letter-spacing: .15px;
}
.node-text.wide { margin-left: 28px; }
.folder2 { margin-left: 18px; }
.node-root {
  width: 296px;
  margin-left: 0;
  padding: 0 0 0 6px;
}
.node-root .eye { margin-right: 12px; }
.root-name {
  display: flex;
  align-items: center;
  width: 196px;
  height: 32px;
  padding-left: 9px;
  background: #8a8a8a;
  color: #fff;
  font-weight: 600;
}
.root-name span { margin-left: 29px; }
.radio { margin-left: 8px; }
.node-sketch {
  width: 222px;
  padding: 0;
  padding-left: 6px;
}
.sketch-ico { margin-left: 18px; }
.sketch-name {
  display: flex;
  align-items: center;
  width: 122px;
  height: 40px;
  margin-left: 14px;
  padding-left: 14px;
  background: #808080;
  color: #fff;
  letter-spacing: .4px;
}
.wavy {
  position: absolute;
  height: 6px;
  background: repeating-linear-gradient(135deg, #6f8bb5 0 3.500px, transparent 3.500px 8.300px);
}
.wavy-folder {
  left: 50px;
  right: 5px;
  bottom: 4px;
}
.wavy-sketch {
  left: 50px;
  right: 10px;
  bottom: 4px;
}

/* view cube */
.viewcube {
  position: absolute;
  top: 57px;
  left: 2263px;
  width: 75px;
  height: 75px;
  display: flex;
  align-items: center;
  justify-content: center;
  background: rgba(236, 238, 240, .8);
  border: 1px solid #a8a8a8;
  box-shadow: 0 0 14px rgba(0, 0, 0, .14);
}
.cube-face {
  display: flex;
  align-items: center;
  justify-content: center;
  width: 47px;
  height: 47px;
  background: #dfe2e7;
  font-family: "Liberation Sans", sans-serif;
  font-size: 17px;
  font-weight: bold;
  color: #9b9ea4;
}
.axis {
  position: absolute;
  font-size: 22px;
  line-height: 1;
}
.axis-y { top: -26px; left: 0; color: #7ce68d; }
.axis-x { top: 56px; left: 78px; color: #ee8a8a; }
.axis-z { top: 64px; left: -12px; color: #6a6ee0; font-weight: 600; }

/* tooltip */
.tooltip {
  position: absolute;
  top: 480px;
  left: 1097px;
  width: 346px;
  height: 35px;
  padding-left: 6px;
  background: #ededed;
  border: 2px solid #b4b4b4;
  box-shadow: 0 6px 18px rgba(0, 0, 0, .25);
  font-family: "Liberation Sans", sans-serif;
  font-size: 27.200px;
  line-height: 33px;
  color: #111;
  white-space: nowrap;
}

/* navigation bar */
.navbar {
  position: absolute;
  top: 954px;
  left: 955px;
  display: flex;
  align-items: center;
  width: 473px;
  height: 48px;
  padding-left: 6px;
  background: #f2f2f2;
}
.nav-c {
  margin-left: 8px;
  border-left-width: 6px;
  border-right-width: 6px;
  border-top-width: 8px;
  border-top-color: #333;
}
.nav-c.tight { margin-left: 6px; }
.nav-look { margin-left: 13px; }
.nav-hand { margin-left: 21px; }
.nav-zoom { margin-left: 20px; }
.nav-fit { margin-left: 20px; }
.nav-mon { margin-left: 14px; }
.nav-grid { margin-left: 13px; }
.nav-view { margin-left: 14px; }

/* sketch palette */
.palette {
  position: absolute;
  top: 355px;
  left: 1883px;
  display: flex;
  flex-direction: column;
  width: 496px;
  height: 597px;
  background: #f3f3f3;
  border: 2px solid #d4d4d4;
  border-right: 0;
}
.palette-head {
  display: flex;
  align-items: center;
  flex: none;
  height: 46px;
  padding-bottom: 2px;
  padding-left: 24px;
  border-bottom: 2px solid #cfcfcf;
}
.palette-head .panel-title { margin-left: 7px; letter-spacing: .3px; }
.palette-arrows { margin-left: auto; margin-right: 6px; }
.palette-body {
  display: flex;
  flex: none;
  height: 478px;
  border-bottom: 2px solid #cfcfcf;
}
.options {
  flex: 1;
  min-width: 0;
  padding-top: 1px;
}
.options-head {
  display: flex;
  align-items: center;
  height: 60px;
  padding-left: 15px;
  font-size: 22.500px;
}
.options-head b {
  margin-left: 14px;
  font-weight: 700;
  color: #3c3c3c;
}
.opt {
  display: flex;
  align-items: center;
  height: 60px;
  padding-left: 24px;
  font-size: 22.500px;
  color: #3c3c3c;
}
.opt-ico {
  display: flex;
  align-items: center;
  margin-left: auto;
  width: 129px;
}
.opt-line { margin-left: -3px; }
.opt-look { margin-left: -2px; }
.opt-ico2 { margin-left: 25px; }
.check {
  position: relative;
  display: block;
  width: 26px;
  height: 26px;
  border: 2.500px solid #444;
  border-radius: 5px;
  background: linear-gradient(#eee, #b4b4b4);
}
.check.on::after {
  content: "";
  position: absolute;
  top: 0;
  left: 6px;
  width: 9px;
  height: 18px;
  border-right: 3px solid #111;
  border-bottom: 3px solid #111;
  transform: rotate(35deg);
}
.scrollbar {
  flex: none;
  width: 12px;
  margin-right: 2px;
  background: #c9c9c9;
}
.thumb {
  height: 312px;
  border-radius: 6px;
  background: #9c9c9c;
}
.palette-foot {
  display: flex;
  justify-content: flex-end;
  align-items: center;
  flex: 1;
  padding-top: 3px;
  padding-right: 20px;
}
.finish-btn {
  width: 168px;
  height: 38px;
  border: 2px solid #c4c4c4;
  background: #f2f2f2;
  font-size: 23.500px;
  line-height: 33px;
  text-align: center;
  color: #6a6a6a;
  letter-spacing: .5px;
}

/* timeline */
.timeline {
  display: flex;
  align-items: flex-start;
  justify-content: space-between;
  flex: 1;
  background: #f2f2f2;
  border-top: 6px solid #cdcdcd;
}
.gear {
  margin: 31px 14px 0 0;
}
```
